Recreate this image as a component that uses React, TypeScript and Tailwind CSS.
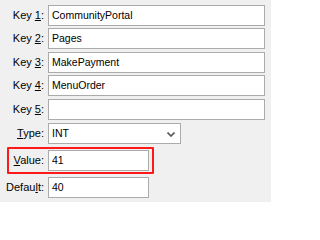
import type { ReactNode } from "react";

const font = { fontFamily: '"Liberation Sans", Arial, sans-serif' };

function Label({ children }: { children: ReactNode }) {
  return (
    <div className="w-[45px] shrink-0 pr-[1px] text-right text-[11px] leading-none text-black">
      {children}
    </div>
  );
}

function Field({ value, w = "w-[217px]" }: { value: string; w?: string }) {
  return (
    <div className={`${w} h-[21px] shrink-0 border border-[#ababab] bg-white pl-[3px] flex items-center text-[10.5px] text-black`}>
      {value}
    </div>
  );
}

function Row({ label, mn, rest, children, mt }: { label: string; mn: string; rest: string; children: ReactNode; mt: string }) {
  return (
    <div className={`flex items-center gap-[3px] ${mt}`}>
      <Label>
        {label}
        <span className="underline underline-offset-[1px]">{mn}</span>
        {rest}
      </Label>
      {children}
    </div>
  );
}

export default function App() {
  const keys = [
    { mn: "1", value: "CommunityPortal", mt: "mt-[5px]" },
    { mn: "2", value: "Pages", mt: "mt-[2px]" },
    { mn: "3", value: "MakePayment", mt: "mt-[3px]" },
    { mn: "4", value: "MenuOrder", mt: "mt-[2px]" },
    { mn: "5", value: "", mt: "mt-[3px]" },
  ];
  return (
    <div className="relative w-[271px] h-[202px] bg-[#f0f0f0] overflow-hidden flex flex-col" style={font}>
      {keys.map((k) => (
        <Row key={k.mn} label="Key " mn={k.mn} rest=":" mt={k.mt}>
          <Field value={k.value} />
        </Row>
      ))}

      <Row label="" mn="T" rest="ype:" mt="mt-[3px]">
        <div className="w-[133px] h-[21px] shrink-0 border border-[#ababab] bg-white pl-[3px] pr-[5px] flex items-center justify-between text-[10.5px] text-black">
          <span>INT</span>
          <svg width="8" height="5" viewBox="0 0 8 5" className="mt-[1px]">
            <path d="M0.5 0.5 L4 4 L7.5 0.5" fill="none" stroke="#555555" strokeWidth="1.6" />
          </svg>
        </div>
      </Row>

      <Row label="" mn="V" rest="alue:" mt="mt-[6px]">
        <Field value="41" w="w-[101px]" />
      </Row>

      <Row label="Defau" mn="l" rest="t:" mt="mt-[6px]">
        <Field value="40" w="w-[101px]" />
      </Row>

      {/* highlight around the Value row */}
      <div className="absolute left-[7px] top-[147px] w-[147px] h-[27px] border-2 border-[#ff1a1a] rounded-[1px] pointer-events-none" />
    </div>
  );
}
